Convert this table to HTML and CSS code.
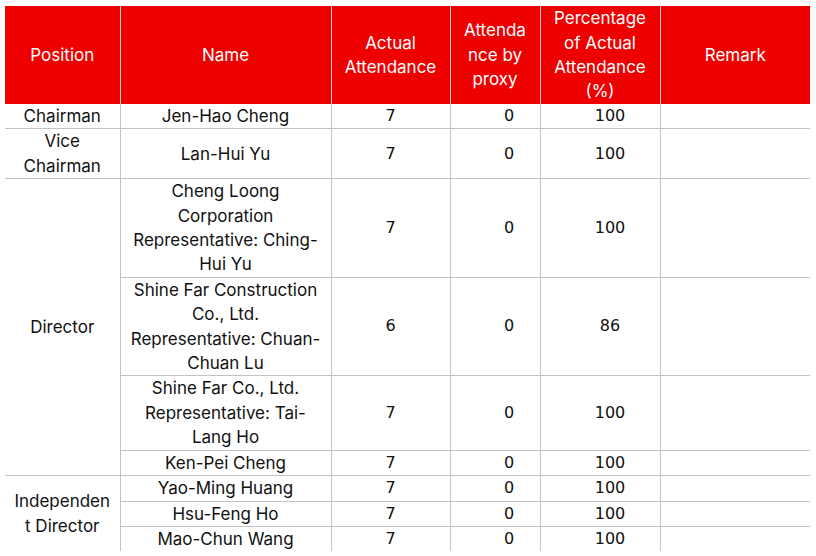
FILE: index.html
```html
<!DOCTYPE html>
<html>
<head>
<meta charset="utf-8">
<link rel="stylesheet" href="styles.css">
</head>
<body>
<table class="att">
  <colgroup>
    <col class="c-pos"><col class="c-name"><col class="c-act"><col class="c-proxy"><col class="c-pct"><col class="c-rem">
  </colgroup>
  <thead>
    <tr>
      <th>Position</th>
      <th>Name</th>
      <th>Actual<br>Attendance</th>
      <th>Attenda<br>nce by<br>proxy</th>
      <th>Percentage<br>of Actual<br>Attendance<br>(%)</th>
      <th>Remark</th>
    </tr>
  </thead>
  <tbody>
    <tr>
      <td class="pos">Chairman</td>
      <td class="name">Jen-Hao Cheng</td>
      <td class="num act">7</td><td class="num proxy">0</td><td class="num pct">100</td><td class="rem"></td>
    </tr>
    <tr>
      <td class="pos">Vice<br>Chairman</td>
      <td class="name">Lan-Hui Yu</td>
      <td class="num act">7</td><td class="num proxy">0</td><td class="num pct">100</td><td class="rem"></td>
    </tr>
    <tr>
      <td class="pos" rowspan="4">Director</td>
      <td class="name">Cheng Loong<br>Corporation<br>Representative: Ching-<br>Hui Yu</td>
      <td class="num act">7</td><td class="num proxy">0</td><td class="num pct">100</td><td class="rem"></td>
    </tr>
    <tr>
      <td class="name">Shine Far Construction<br>Co., Ltd.<br>Representative: Chuan-<br>Chuan Lu</td>
      <td class="num act">6</td><td class="num proxy">0</td><td class="num pct">86</td><td class="rem"></td>
    </tr>
    <tr>
      <td class="name">Shine Far Co., Ltd.<br>Representative: Tai-<br>Lang Ho</td>
      <td class="num act">7</td><td class="num proxy">0</td><td class="num pct">100</td><td class="rem"></td>
    </tr>
    <tr>
      <td class="name">Ken-Pei Cheng</td>
      <td class="num act">7</td><td class="num proxy">0</td><td class="num pct">100</td><td class="rem"></td>
    </tr>
    <tr>
      <td class="pos" rowspan="3">Independen<br>t Director</td>
      <td class="name">Yao-Ming Huang</td>
      <td class="num act">7</td><td class="num proxy">0</td><td class="num pct">100</td><td class="rem"></td>
    </tr>
    <tr>
      <td class="name">Hsu-Feng Ho</td>
      <td class="num act">7</td><td class="num proxy">0</td><td class="num pct">100</td><td class="rem"></td>
    </tr>
    <tr>
      <td class="name">Mao-Chun Wang</td>
      <td class="num act">7</td><td class="num proxy">0</td><td class="num pct">100</td><td class="rem"></td>
    </tr>
  </tbody>
</table>
</body>
</html>
```

FILE: styles.css
```css
html, body {
  margin: 0;
  background: #ffffff;
}
body {
  padding: 6px 0 0 5px;
  font-family: "Inter", "Liberation Sans", sans-serif;
  color: #111111;
}
.att {
  border-collapse: collapse;
  table-layout: fixed;
  width: 805px;
  font-size: 17px;
  line-height: 24.4px;
}
.c-pos { width: 115px; }
.c-name { width: 211px; }
.c-act { width: 119px; }
.c-proxy { width: 90px; }
.c-pct { width: 120px; }
.c-rem { width: 150px; }

.att th {
  background: #ee0000;
  color: #ffffff;
  font-weight: normal;
  padding: 0;
  text-align: center;
  vertical-align: middle;
  border-left: 1px solid #f6cccc;
  height: 98px;
}
.att th:first-child { border-left: none; }

.att td {
  padding: 0;
  text-align: center;
  vertical-align: middle;
  border-top: 1px solid #c3c3c3;
  border-left: 1px solid #c3c3c3;
}
.att tbody tr:first-child td { border-top: none; }
.att td.pos { border-left: none; }
.att .num {
  font-family: "DejaVu Sans", Verdana, sans-serif;
  font-size: 16px;
}
.att .proxy { padding-left: 28px; }
.att .pct { padding-left: 20px; }
```
